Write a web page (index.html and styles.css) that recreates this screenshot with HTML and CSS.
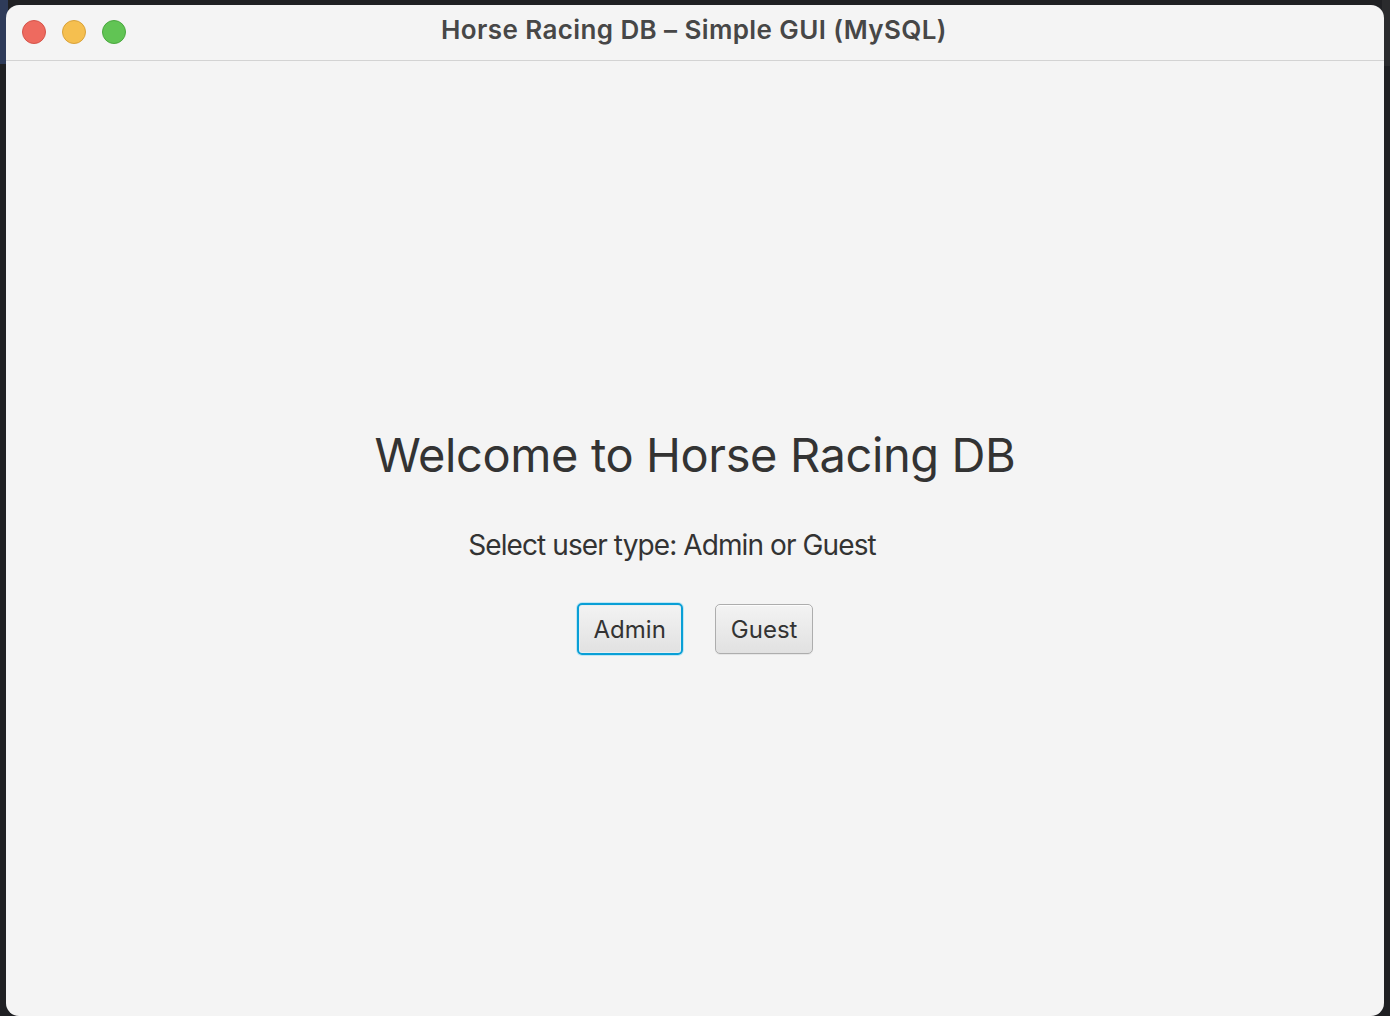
FILE: index.html
```html
<!DOCTYPE html>
<html lang="en">
<head>
    <meta charset="UTF-8">
    <meta name="viewport" content="width=device-width, initial-scale=1.0">
    <title>Horse Racing DB – Simple GUI (MySQL)</title>
    <link rel="stylesheet" href="styles.css">
</head>
<body>

<div class="window">
    <div class="titlebar">
        <div class="lights">
            <span class="light close"></span>
            <span class="light minimize"></span>
            <span class="light zoom"></span>
        </div>
        <div class="title">Horse Racing DB – Simple GUI (MySQL)</div>
    </div>

    <div class="content">
        <h1 class="welcome">Welcome to Horse Racing DB</h1>
        <p class="prompt">Select user type: Admin or Guest</p>
        <div class="actions">
            <button class="btn focused" id="admin">Admin</button>
            <button class="btn" id="guest">Guest</button>
        </div>
    </div>
</div>

</body>
</html>
```

FILE: styles.css
```css
html, body {
    margin: 0;
    height: 100%;
    overflow: hidden;
}

body {
    /* editor behind the window: navy top strip on the left, dark panes elsewhere */
    background:
        linear-gradient(#2e3b59, #2e3b59) 0 0 / 8px 64px no-repeat,
        linear-gradient(#2a2b2d, #2a2b2d) right 0 top 0 / 8px 66px no-repeat,
        #1f2023;
    font-family: Inter, "Noto Sans", sans-serif;
}

.window {
    margin: 5px 0 0 6px;
    width: 1378px;
    height: 1011px;
    background-color: #f4f4f4;
    border-radius: 13px;
    display: flex;
    flex-direction: column;
    overflow: hidden;
}

.titlebar {
    position: relative;
    height: 55px;
    flex: none;
    border-bottom: 1px solid #d3d3d3;
    display: flex;
    align-items: center;
    justify-content: center;
}

.lights {
    position: absolute;
    left: 16px;
    top: 15px;
    display: flex;
    gap: 16px;
}

.light {
    width: 24px;
    height: 24px;
    border-radius: 50%;
    box-sizing: border-box;
}

.close {
    background-color: #ee6a5f;
    border: 1px solid #d5544a;
}

.minimize {
    background-color: #f5bf4f;
    border: 1px solid #d9a23a;
}

.zoom {
    background-color: #61c454;
    border: 1px solid #4aa83f;
}

.title {
    font-size: 26px;
    font-weight: 600;
    letter-spacing: 0.4px;
    color: #474747;
    margin-left: -2px;
    margin-top: -6px;
}

.content {
    flex: 1;
    display: flex;
    flex-direction: column;
    align-items: center;
    justify-content: center;
    padding-top: 4px;
}

.welcome {
    margin: 0;
    font-size: 47px;
    font-weight: 400;
    letter-spacing: -0.4px;
    color: #333333;
}

.prompt {
    margin: 45px 46px 0 0;
    font-size: 28px;
    letter-spacing: -0.9px;
    color: #333333;
}

.actions {
    display: flex;
    align-items: center;
    gap: 32px;
    margin-top: 41px;
}

.btn {
    font-family: inherit;
    font-size: 24px;
    color: #333333;
    height: 50px;
    padding: 0 15px;
    border: 1px solid #adadad;
    border-radius: 5px;
    background: linear-gradient(#f3f3f3, #e1e1e1);
    box-shadow: inset 0 1px 0 #fdfdfd, 0 1px 0 #e6e6e6;
}

.btn.focused {
    height: 52px;
    padding: 0 15px;
    border: 2px solid #099fd6;
    box-shadow: 0 0 0 1px #bfe6f4, inset 0 0 0 1px #e8eef0;
}
```
